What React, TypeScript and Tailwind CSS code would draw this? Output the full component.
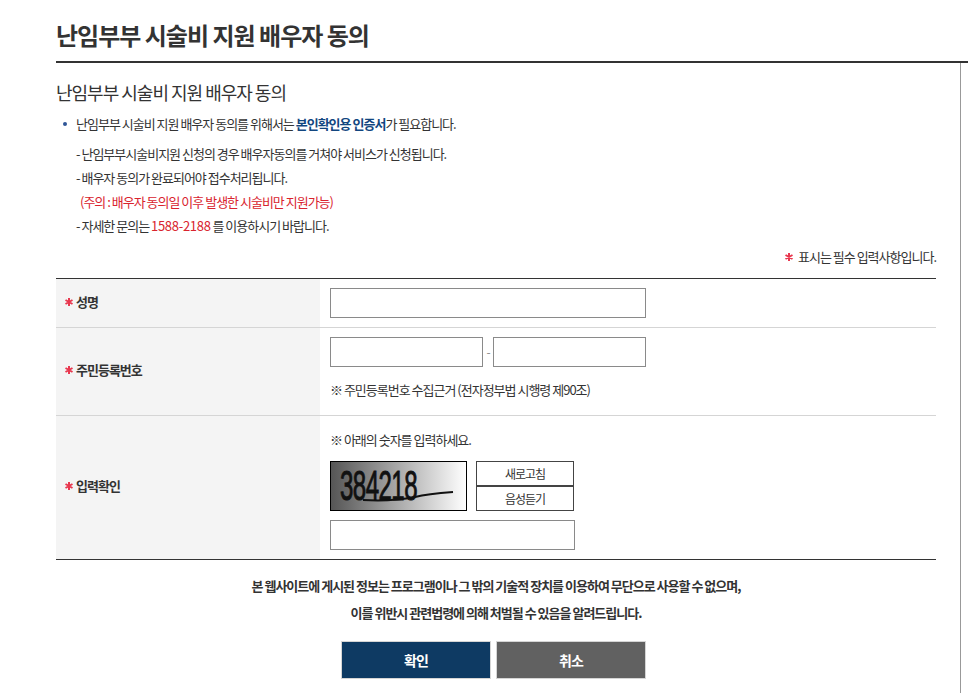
const font = { fontFamily: '"Noto Sans CJK KR", "Noto Sans", sans-serif' };

function Star() {
  return (
    <svg viewBox="0 0 8 8" className="w-[8px] h-[8px] shrink-0" stroke="#e8384f" strokeWidth="2">
      <path d="M4 0v8M0.5 2l7 4M7.5 2l-7 4" />
    </svg>
  );
}

function Label({ text }: { text: string }) {
  return (
    <div className="w-[264px] shrink-0 bg-[#f4f4f4] flex items-center gap-[3px] pl-[9px] pb-[3px] text-[13px] font-bold text-[#333] tracking-[-1px]">
      <Star />
      <span>{text}</span>
    </div>
  );
}

function Captcha() {
  return (
    <svg viewBox="0 0 137 50" className="w-[137px] h-[50px] block overflow-visible">
      <defs>
        <linearGradient id="cap" x1="0" x2="1" y1="0" y2="0">
          <stop offset="0" stopColor="#555" />
          <stop offset="1" stopColor="#fff" />
        </linearGradient>
      </defs>
      <rect x="0.5" y="0.5" width="136" height="49" fill="url(#cap)" stroke="#000" strokeWidth="1" />
      <text
        x="10"
        y="39"
        fontFamily="Liberation Sans, sans-serif"
        fontSize="43"
        fill="#111"
        stroke="#111"
        strokeWidth="1"
        textLength="77"
        lengthAdjust="spacingAndGlyphs"
      >
        384218
      </text>
      <path d="M33 39C50 40 70 39 85 36C97 33 110 32 123 31" fill="none" stroke="#111" strokeWidth="2" />
    </svg>
  );
}

export default function App() {
  return (
    <div style={font} className="bg-white min-h-[693px] overflow-hidden text-[#333] tracking-[-1px]">
      {/* Header */}
      <div className="ml-[56px] h-[63px] border-b-2 border-[#333]">
        <h1 className="pt-[17px] text-[24px] leading-[36px] font-bold tracking-[-1px] text-[#333]">
          난임부부 시술비 지원 배우자 동의
        </h1>
      </div>

      <div className="ml-[56px] w-[905px] border-r border-[#999] pr-[24px] min-h-[630px]">
        <h2 className="pt-[16px] text-[18px] leading-[26px] font-normal tracking-[-1px]">
          난임부부 시술비 지원 배우자 동의
        </h2>

        {/* Notice */}
        <ul className="mt-[9px] text-[13px]">
          <li className="flex items-center h-[20px] pl-[7px] gap-[9px]">
            <span className="w-[4px] h-[4px] rounded-full bg-[#2f5597]" />
            <span>
              난임부부 시술비 지원 배우자 동의를 위해서는{" "}
              <b className="text-[#12467f] font-bold">본인확인용 인증서</b>가 필요합니다.
            </span>
          </li>
        </ul>
        <div className="mt-[8px] pl-[20px] text-[13px] leading-[24px]">
          <p>- 난임부부시술비지원 신청의 경우 배우자동의를 거쳐야 서비스가 신청됩니다.</p>
          <p>- 배우자 동의가 완료되어야 접수처리됩니다.</p>
          <p className="pl-[4px] text-[#d9232e]">(주의 : 배우자 동의일 이후 발생한 시술비만 지원가능)</p>
          <p>
            - 자세한 문의는 <span className="text-[#d9232e] tracking-[-0.3px]">1588-2188</span> 를 이용하시기 바랍니다.
          </p>
        </div>

        <div className="mt-[9px] h-[20px] flex items-center justify-end gap-[5px] text-[13px]">
          <Star />
          <span>표시는 필수 입력사항입니다.</span>
        </div>

        {/* Form table */}
        <div className="mt-[11px] border-t border-b border-[#333]">
          <div className="flex h-[49px] border-b border-[#d5d5d5]">
            <Label text="성명" />
            <div className="pl-[10px] pt-[9px]">
              <div className="w-[316px] h-[30px] border border-[#8a8a8a]" />
            </div>
          </div>
          <div className="flex h-[88px] border-b border-[#d5d5d5]">
            <Label text="주민등록번호" />
            <div className="pl-[10px] pt-[9px]">
              <div className="flex items-center">
                <div className="w-[153px] h-[30px] border border-[#8a8a8a]" />
                <span className="w-[10px] text-center text-[12px] text-[#888]">-</span>
                <div className="w-[153px] h-[30px] border border-[#8a8a8a]" />
              </div>
              <p className="mt-[14px] text-[13px] leading-[18px]">※ 주민등록번호 수집근거 (전자정부법 시행령 제90조)</p>
            </div>
          </div>
          <div className="flex h-[143px]">
            <Label text="입력확인" />
            <div className="pl-[10px] pt-[15px]">
              <p className="text-[13px] leading-[18px]">※ 아래의 숫자를 입력하세요.</p>
              <div className="mt-[12px] flex gap-[9px]">
                <Captcha />
                <div className="flex flex-col w-[98px] text-[12px]">
                  <button className="h-[25px] border border-[#444] bg-white">새로고침</button>
                  <button className="h-[25px] border border-[#444] bg-white">음성듣기</button>
                </div>
              </div>
              <div className="mt-[9px] w-[245px] h-[30px] border border-[#8a8a8a]" />
            </div>
          </div>
        </div>

        {/* Legal text */}
        <div className="mt-[12px] text-center text-[13px] font-bold leading-[27px] tracking-[-1px]">
          <p>본 웹사이트에 게시된 정보는 프로그램이나 그 밖의 기술적 장치를 이용하여 무단으로 사용할 수 없으며,</p>
          <p>이를 위반시 관련법령에 의해 처벌될 수 있음을 알려드립니다.</p>
        </div>

        <div className="mt-[15px] flex justify-center gap-[5px] pr-[5px]">
          <button className="w-[150px] h-[38px] bg-[#0e3a63] border border-[#d5d5d5] text-white text-[14px] font-bold">
            확인
          </button>
          <button className="w-[150px] h-[38px] bg-[#616161] border border-[#d5d5d5] text-white text-[14px] font-bold">
            취소
          </button>
        </div>
      </div>
    </div>
  );
}
